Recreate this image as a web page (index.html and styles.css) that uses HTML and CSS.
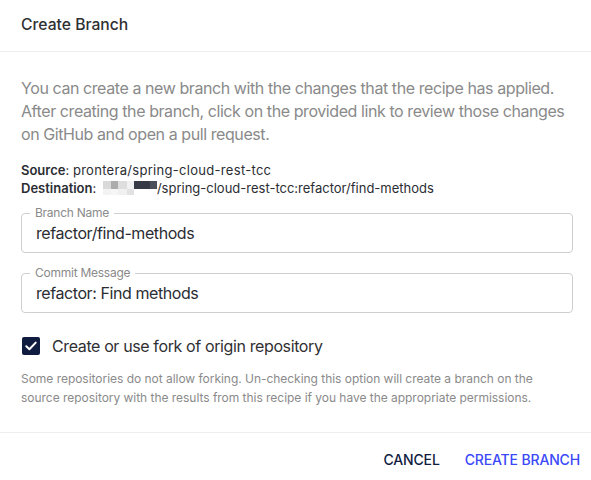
FILE: index.html
```html
<!DOCTYPE html>
<html>
<head>
<meta charset="utf-8">
<link rel="stylesheet" href="styles.css">
</head>
<body>
<div class="dialog">
  <div class="header">Create Branch</div>
  <div class="content">
    <p class="desc">You can create a new branch with the changes that the recipe has applied. After creating the branch, click on the provided link to review those changes on GitHub and open a pull request.</p>
    <div class="meta">
      <div><b>Source</b>: <span class="src">prontera/spring-cloud-rest-tcc</span></div>
      <div><b>Destination</b>: <svg class="blur" width="54" height="14" viewBox="0 0 54 14"><rect x="0" y="0" width="8" height="8" fill="#d9d9d9"/><rect x="8" y="0" width="7" height="8" fill="#acacac"/><rect x="15" y="0" width="9" height="8" fill="#dedede"/><rect x="24" y="0" width="7" height="8" fill="#f1f1f1"/><rect x="31" y="0" width="16" height="8" fill="#363b45"/><rect x="47" y="0" width="7" height="8" fill="#4c5058"/><rect x="0" y="8" width="8" height="6" fill="#f3f3f3"/><rect x="8" y="8" width="7" height="6" fill="#f6f6f6"/><rect x="15" y="8" width="9" height="6" fill="#f0f0f0"/><rect x="24" y="8" width="7" height="6" fill="#e2e2e2"/></svg>/spring-cloud-rest-tcc:refactor/find-methods</div>
    </div>
    <fieldset class="field">
      <legend>Branch Name</legend>
      <div class="value">refactor/find-methods</div>
    </fieldset>
    <fieldset class="field">
      <legend>Commit Message</legend>
      <div class="value">refactor: Find methods</div>
    </fieldset>
    <label class="check">
      <span class="box"><svg width="12" height="10" viewBox="0 0 12 10"><path d="M1.3 5.2 L4.4 8.2 L10.7 1.6" fill="none" stroke="#fff" stroke-width="2" stroke-linecap="round" stroke-linejoin="round"/></svg></span>
      <span>Create or use fork of origin repository</span>
    </label>
    <p class="hint">Some repositories do not allow forking. Un-checking this option will create a branch on the source repository with the results from this recipe if you have the appropriate permissions.</p>
  </div>
  <div class="footer">
    <button class="btn cancel">CANCEL</button>
    <button class="btn primary">CREATE BRANCH</button>
  </div>
</div>
</body>
</html>
```
FILE: styles.css
```css
html, body {
  margin: 0;
  padding: 0;
  background: #fff;
}
body {
  font-family: Inter, "Noto Sans", sans-serif;
  color: #333;
}
.dialog {
  width: 591px;
  height: 480px;
  display: flex;
  flex-direction: column;
}
.header {
  height: 52px;
  box-sizing: border-box;
  padding: 0 21px 2px;
  display: flex;
  align-items: center;
  font-size: 15.7px;
  font-weight: 500;
  color: #2f3033;
  border-bottom: 1px solid #eeeeee;
}
.content {
  padding: 25px 18px 0 21px;
  flex: 1;
}
.desc {
  margin: 0 -11px 0 0;
  font-size: 16px;
  line-height: 23px;
  color: #8a8a8a;
  letter-spacing: -0.42px;
}
.meta {
  margin-top: 15px;
  font-size: 13px;
  line-height: 18px;
  color: #2b2d33;
  letter-spacing: 0;
}
.meta b {
  font-weight: 600;
}
.src {
  letter-spacing: 0.3px;
}
.blur {
  vertical-align: -2px;
  margin-left: 3px;
}
.field {
  margin: 9px 0 0;
  padding: 0 14px;
  border: 1px solid #cfcfcf;
  border-radius: 4px;
  height: 47px;
  box-sizing: border-box;
  min-width: 0;
}
.field + .field {
  margin-top: 13px;
}
.field legend {
  font-size: 12px;
  line-height: 14px;
  color: #8a8a8a;
  padding: 0 5px;
  margin-left: -6px;
  letter-spacing: -0.25px;
}
.value {
  font-size: 16px;
  line-height: 20px;
  color: #2b2d33;
  margin-top: 3px;
  letter-spacing: -0.42px;
}
.check {
  display: flex;
  align-items: center;
  gap: 12px;
  margin-top: 23px;
  padding-left: 1px;
  font-size: 16px;
  color: #2f3033;
  letter-spacing: -0.38px;
}
.box {
  width: 18px;
  height: 18px;
  border-radius: 2px;
  background: #0f1c3f;
  display: flex;
  align-items: center;
  justify-content: center;
}
.hint {
  margin: 13px 0 0;
  font-size: 12px;
  line-height: 19px;
  color: #8a8a8a;
  letter-spacing: -0.03px;
}
.footer {
  height: 47px;
  border-top: 1px solid #eeeeee;
  display: flex;
  justify-content: flex-end;
  align-items: center;
  gap: 25px;
  padding: 0 11px 0 0;
}
.btn {
  border: 0;
  background: none;
  font-family: Inter, "Noto Sans", sans-serif;
  font-size: 14px;
  font-weight: 500;
  padding: 0;
  letter-spacing: -0.15px;
  margin-top: 5px;
}
.cancel {
  color: #0f1c3f;
}
.primary {
  color: #3a48f8;
}
```
